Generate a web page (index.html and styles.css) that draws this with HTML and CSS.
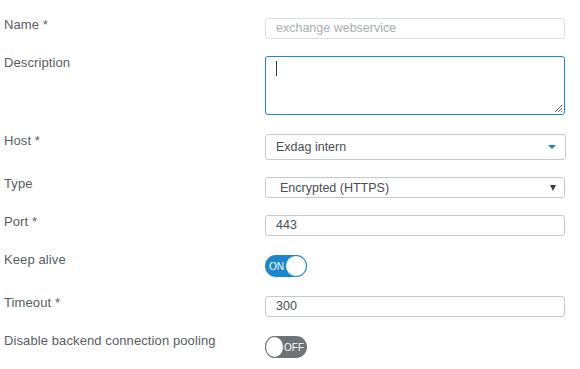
FILE: index.html
```html
<!DOCTYPE html>
<html lang="en">
<head>
    <meta charset="UTF-8">
    <title>Reverse Proxy Server</title>
    <link rel="stylesheet" href="styles.css">
</head>
<body>
    <form class="form">
        <div class="row">
            <label class="label">Name *</label>
            <div class="field">
                <div class="input placeholder">exchange webservice</div>
            </div>
        </div>

        <div class="row">
            <label class="label">Description</label>
            <div class="field">
                <div class="textarea focused">
                    <span class="caret"></span>
                    <svg class="grip" width="9" height="9" viewBox="0 0 9 9">
                        <path d="M1 8 L8 1 M4 8 L8 4 M7 8 L8 7" stroke="#666" stroke-width="1"/>
                    </svg>
                </div>
            </div>
        </div>

        <div class="row">
            <label class="label">Host *</label>
            <div class="field">
                <div class="select select-big">
                    <span>Exdag intern</span>
                    <span class="arrow arrow-blue"></span>
                </div>
            </div>
        </div>

        <div class="row">
            <label class="label">Type</label>
            <div class="field">
                <div class="select select-native">
                    <span>Encrypted (HTTPS)</span>
                    <span class="arrow arrow-dark"></span>
                </div>
            </div>
        </div>

        <div class="row">
            <label class="label">Port *</label>
            <div class="field">
                <div class="input">443</div>
            </div>
        </div>

        <div class="row">
            <label class="label">Keep alive</label>
            <div class="field">
                <div class="toggle on">
                    <span class="toggle-text">ON</span>
                    <span class="knob"></span>
                </div>
            </div>
        </div>

        <div class="row">
            <label class="label">Timeout *</label>
            <div class="field">
                <div class="input">300</div>
            </div>
        </div>

        <div class="row">
            <label class="label">Disable backend connection pooling</label>
            <div class="field">
                <div class="toggle off">
                    <span class="knob"></span>
                    <span class="toggle-text">OFF</span>
                </div>
            </div>
        </div>
    </form>
</body>
</html>
```

FILE: styles.css
```css
body {
    margin: 0;
    padding: 0;
    background-color: #fff;
    font-family: "Liberation Sans", Arial, sans-serif;
    font-size: 13px;
    color: #585d63;
}

.form {
    display: flex;
    flex-direction: column;
    gap: 17px;
    padding: 18px 0 0 4px;
}

.row {
    display: grid;
    grid-template-columns: 261px 301px;
}

.label {
    line-height: 13px;
    letter-spacing: 0.1px;
}

.input,
.select,
.textarea {
    box-sizing: border-box;
    width: 300px;
    border: 1px solid #c5c8cc;
    border-radius: 3px;
    background-color: #fff;
    color: #4a4e53;
}

.input {
    height: 21px;
    line-height: 19px;
    padding-left: 10px;
    font-size: 12.5px;
}

.input.placeholder {
    color: #a9adb2;
    border-color: #dcdfe2;
}

.textarea {
    position: relative;
    height: 59px;
    margin-bottom: 2px;
    padding: 4px 10px;
}

.textarea.focused {
    border-color: #1f8ad2;
}

.caret {
    display: block;
    width: 1px;
    height: 15px;
    background-color: #2c3e50;
}

.grip {
    position: absolute;
    right: 1px;
    bottom: 1px;
}

.select {
    display: flex;
    align-items: center;
    justify-content: space-between;
    font-size: 12.5px;
}

.select-big {
    width: 301px;
    height: 26px;
    padding: 0 8px 0 10px;
}

.select-native {
    height: 21px;
    padding: 0 8px 0 14px;
}

.arrow {
    width: 0;
    height: 0;
    border-left: 4px solid transparent;
    border-right: 4px solid transparent;
}

.arrow-blue {
    border-top: 4px solid #1e7fc6;
    margin-right: 1px;
}

.arrow-dark {
    border-top: 6px solid #3a3f44;
    border-left-width: 3px;
    border-right-width: 3px;
}

.toggle {
    box-sizing: border-box;
    display: flex;
    align-items: center;
    width: 42px;
    height: 22px;
    margin: 2px 0;
    border-radius: 11px;
    font-size: 10px;
    color: #fff;
}

.toggle.on {
    background-color: #1c86cc;
    padding-left: 4px;
    justify-content: space-between;
}

.toggle.off {
    background-color: #6e7378;
    padding-right: 3px;
    justify-content: space-between;
}

.knob {
    box-sizing: border-box;
    width: 22px;
    height: 22px;
    border-radius: 50%;
    background-color: #fff;
    border: 1px solid #1c86cc;
}

.toggle.off .knob {
    border-color: #6e7378;
}
```
